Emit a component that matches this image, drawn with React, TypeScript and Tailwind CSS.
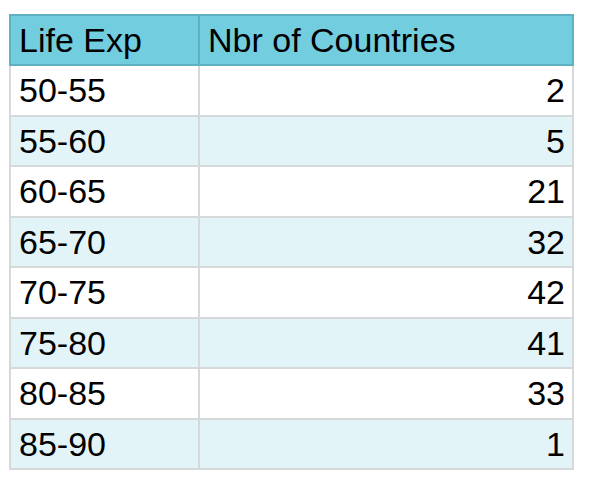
const rows = [
  { range: "50-55", count: 2 },
  { range: "55-60", count: 5 },
  { range: "60-65", count: 21 },
  { range: "65-70", count: 32 },
  { range: "70-75", count: 42 },
  { range: "75-80", count: 41 },
  { range: "80-85", count: 33 },
  { range: "85-90", count: 1 },
];

export default function App() {
  return (
    <div className="w-[592px] h-[484px] bg-white pt-[14px] pl-[9px]">
      <table
        className="w-[565px] border-collapse text-[34px] text-black leading-none"
        style={{ fontFamily: '"Liberation Sans", Arial, sans-serif' }}
      >
        <thead>
          <tr className="h-[50px] bg-[#72cddf]">
            <th className="w-[189px] border-2 border-[#5fb0c0] px-[8px] text-left font-normal">
              Life Exp
            </th>
            <th className="border-2 border-[#5fb0c0] px-[8px] text-left font-normal">
              Nbr of Countries
            </th>
          </tr>
        </thead>
        <tbody>
          {rows.map((r, i) => (
            <tr
              key={r.range}
              className={`h-[50.5px] ${i % 2 === 1 ? "bg-[#e3f4f9]" : "bg-white"}`}
            >
              <td className="border-2 border-[#d6d9da] px-[8px] text-left">
                {r.range}
              </td>
              <td className="border-2 border-[#d6d9da] px-[7px] text-right">
                {r.count}
              </td>
            </tr>
          ))}
        </tbody>
      </table>
    </div>
  );
}
